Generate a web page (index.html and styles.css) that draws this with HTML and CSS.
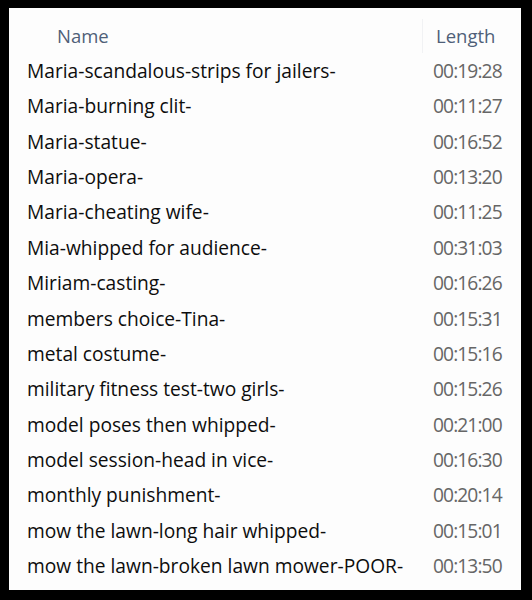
FILE: index.html
```html
<!DOCTYPE html>
<html>
<head>
<meta charset="utf-8">
<link rel="stylesheet" href="styles.css">
</head>
<body>
<div class="panel">
  <div class="header">
    <div class="h-name">Name</div>
    <div class="h-len">Length</div>
  </div>
  <div class="list">
    <div class="row"><span class="name">Maria-scandalous-strips for jailers-</span><span class="len">00:19:28</span></div>
    <div class="row"><span class="name">Maria-burning clit-</span><span class="len">00:11:27</span></div>
    <div class="row"><span class="name">Maria-statue-</span><span class="len">00:16:52</span></div>
    <div class="row"><span class="name">Maria-opera-</span><span class="len">00:13:20</span></div>
    <div class="row"><span class="name">Maria-cheating wife-</span><span class="len">00:11:25</span></div>
    <div class="row"><span class="name">Mia-whipped for audience-</span><span class="len">00:31:03</span></div>
    <div class="row"><span class="name">Miriam-casting-</span><span class="len">00:16:26</span></div>
    <div class="row"><span class="name">members choice-Tina-</span><span class="len">00:15:31</span></div>
    <div class="row"><span class="name">metal costume-</span><span class="len">00:15:16</span></div>
    <div class="row"><span class="name">military fitness test-two girls-</span><span class="len">00:15:26</span></div>
    <div class="row"><span class="name">model poses then whipped-</span><span class="len">00:21:00</span></div>
    <div class="row"><span class="name">model session-head in vice-</span><span class="len">00:16:30</span></div>
    <div class="row"><span class="name">monthly punishment-</span><span class="len">00:20:14</span></div>
    <div class="row"><span class="name">mow the lawn-long hair whipped-</span><span class="len">00:15:01</span></div>
    <div class="row"><span class="name">mow the lawn-broken lawn mower-POOR-</span><span class="len">00:13:50</span></div>
  </div>
</div>
</body>
</html>
```
FILE: styles.css
```css
html, body {
  margin: 0;
  padding: 0;
  background: #000;
}
body {
  width: 532px;
  height: 600px;
  overflow: hidden;
  font-family: "Open Sans", "Noto Sans", sans-serif;
}
.panel {
  margin: 8px 11px 0 9px;
  width: 512px;
  height: 582px;
  background: #fdfdfd;
  box-sizing: border-box;
  padding-top: 11px;
}
.header {
  display: grid;
  grid-template-columns: 414px 98px;
  height: 34px;
  font-size: 18.5px;
  line-height: 34px;
  color: #4f5f78;
}
.h-name {
  padding-left: 48px;
  border-right: 1px solid #f1f2f4;
}
.h-len {
  padding-left: 13px;
}
.list {
  display: flex;
  flex-direction: column;
}
.row {
  display: grid;
  grid-template-columns: 424px 88px;
  height: 35.36px;
  line-height: 35.36px;
  font-size: 19.2px;
}
.name {
  padding-left: 18px;
  color: #0d0d0d;
  white-space: nowrap;
}
.len {
  color: #666;
  letter-spacing: -0.9px;
}
```
